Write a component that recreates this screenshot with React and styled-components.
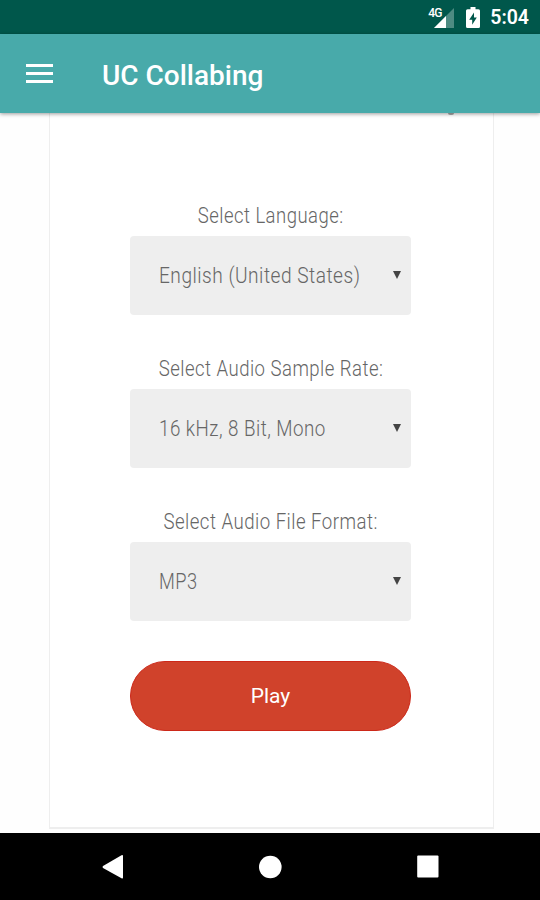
import React from "react";
import styled, { createGlobalStyle } from "styled-components";

const fields = [
  { label: "Select Language:", labelStretch: 0.86, value: "English (United States)", stretch: 0.89 },
  { label: "Select Audio Sample Rate:", labelStretch: 0.863, value: "16 kHz, 8 Bit, Mono", stretch: 0.873 },
  { label: "Select Audio File Format:", labelStretch: 0.867, value: "MP3", stretch: 0.85 },
];

export default function App() {
  return (
    <>
      <GlobalStyle />
      <Screen>
        <StatusBar>
          <Signal />
          <Battery />
          <Time>5:04</Time>
        </StatusBar>
        <AppBar>
          <MenuButton aria-label="Menu">
            <span />
            <span />
            <span />
          </MenuButton>
          <Title>UC Collabing</Title>
        </AppBar>
        <Content>
          <Card>
            <ScrolledMark />
            {fields.map((field) => (
              <Field key={field.label}>
                <Label>
                  <Condensed $stretch={field.labelStretch}>{field.label}</Condensed>
                </Label>
                <SelectBox type="button">
                  <Condensed $stretch={field.stretch} $origin="left">{field.value}</Condensed>
                  <Arrow />
                </SelectBox>
              </Field>
            ))}
            <PlayButton>Play</PlayButton>
          </Card>
        </Content>
        <NavBar>
          <svg width="22" height="26" viewBox="0 0 22 26">
            <path d="M1 12 19.5 1.2Q21 .4 21 2V23.500Q21 25 19.500 24.300L1 14Q0 13 1 12Z" fill="#fff" />
          </svg>
          <svg width="24" height="24" viewBox="0 0 24 24">
            <circle cx="11.300" cy="12" r="11.300" fill="#fff" />
          </svg>
          <svg width="22" height="23" viewBox="0 0 22 23">
            <rect x=".2" y=".5" width="21.300" height="22" rx="1" fill="#fff" />
          </svg>
        </NavBar>
      </Screen>
    </>
  );
}

function Signal() {
  return (
    <SignalIcon>
      <svg width="20" height="20" viewBox="0 0 20 20">
        <path d="M20 0V20H0Z" fill="#4d8b82" />
        <path d="M12 8V20H0Z" fill="#fff" />
      </svg>
      <Network>4G</Network>
    </SignalIcon>
  );
}

function Battery() {
  return (
    <BatteryIcon width="14" height="21" viewBox="0 0 14 21">
      <path d="M4.500 0h5v2.200H12.500Q14 2.200 14 3.700V19.500Q14 21 12.500 21H1.500Q0 21 0 19.500V3.700Q0 2.200 1.500 2.200H4.500Z" fill="#fff" />
      <path d="M8 5.500 3.200 12.700H6.200V17.800L10.800 10.500H8Z" fill="#00574b" />
    </BatteryIcon>
  );
}

const GlobalStyle = createGlobalStyle`
  * {
    box-sizing: border-box;
  }
  body {
    margin: 0;
    background: #fff;
    font-family: Roboto, "Liberation Sans", sans-serif;
  }
`;

const Screen = styled.div`
  width: 540px;
  height: 900px;
  display: flex;
  flex-direction: column;
  overflow: hidden;
`;

const StatusBar = styled.div`
  flex: 0 0 34px;
  height: 34px;
  display: flex;
  align-items: flex-start;
  justify-content: flex-end;
  padding-right: 11px;
  background: #00574b;
`;

const SignalIcon = styled.div`
  position: relative;
  width: 20px;
  height: 20px;
  margin-top: 8px;
  svg {
    display: block;
  }
`;

const Network = styled.span`
  position: absolute;
  left: -6px;
  top: -1px;
  color: #fff;
  font-size: 12px;
  font-weight: 500;
  line-height: 12px;
  letter-spacing: -0.8px;
`;

const BatteryIcon = styled.svg`
  margin: 7px 0 0 12px;
`;

const Time = styled.span`
  height: 34px;
  margin-left: 10px;
  color: #fff;
  font-size: 19.5px;
  font-weight: 600;
  line-height: 34px;
  padding-top: 1px;
  overflow: hidden;
`;

const AppBar = styled.header`
  position: relative;
  z-index: 1;
  flex: 0 0 79px;
  display: flex;
  align-items: center;
  padding-left: 26px;
  background: #48aaaa;
  box-shadow: 0 1px 4px rgba(0, 0, 0, 0.4);
`;

const MenuButton = styled.button`
  display: flex;
  flex-direction: column;
  gap: 5px;
  width: 27px;
  padding: 0;
  border: 0;
  background: none;
  span {
    height: 3px;
    background: #fff;
  }
`;

const Title = styled.h1`
  margin: 4px 0 0 49px;
  color: #fff;
  font-size: 28px;
  font-weight: 500;
  line-height: 36px;
`;

const Content = styled.main`
  flex: 1;
  display: flex;
  padding: 0 46px 4px 49px;
  background: #fefefe;
`;

const Card = styled.section`
  flex: 1;
  display: flex;
  flex-direction: column;
  padding: 0 81px 0 80px;
  border: solid #eeeeee;
  border-width: 0 1px 2px;
  background: #fff;
`;

/* tail of the content scrolled up under the app bar */
const ScrolledMark = styled.div`
  flex: 0 0 2px;
  width: 6px;
  margin: 0 -42px 86px 0;
  align-self: flex-end;
  border-radius: 0 0 3px 3px;
  background: #aaa;
`;

const Field = styled.div`
  margin-bottom: 39px;
  &:nth-last-child(2) {
    margin-bottom: 40px;
  }
`;

const Label = styled.div`
  height: 35px;
  line-height: 29px;
  display: flex;
  justify-content: center;
  font-size: 21.5px;
  font-weight: 300;
  color: #666;
  white-space: nowrap;
`;

/* narrows the letterforms without changing their height */
const Condensed = styled.span`
  display: inline-block;
  white-space: nowrap;
  letter-spacing: 0.55px;
  transform: scaleX(${(props) => props.$stretch});
  transform-origin: ${(props) => props.$origin || "center"};
`;

const SelectBox = styled.button`
  width: 281px;
  height: 79px;
  display: flex;
  align-items: center;
  justify-content: space-between;
  padding: 0 10px 0 29px;
  border: 0;
  border-radius: 4px;
  background: #eee;
  color: #666;
  font-family: inherit;
  font-size: 21.5px;
  font-weight: 300;
`;

const Arrow = styled.i`
  border: solid transparent;
  border-width: 8px 4px 0;
  border-top-color: #444;
  margin-top: -2px;
`;

const PlayButton = styled.button`
  width: 281px;
  height: 70px;
  border: 1px solid #cc2819;
  border-radius: 35px;
  background: #d0422b;
  color: #fff;
  font-family: inherit;
  font-size: 21px;
  font-weight: 400;
`;

const NavBar = styled.nav`
  flex: 0 0 67px;
  display: flex;
  align-items: center;
  justify-content: space-between;
  padding: 0 101px 0 102px;
  background: #000;
`;
